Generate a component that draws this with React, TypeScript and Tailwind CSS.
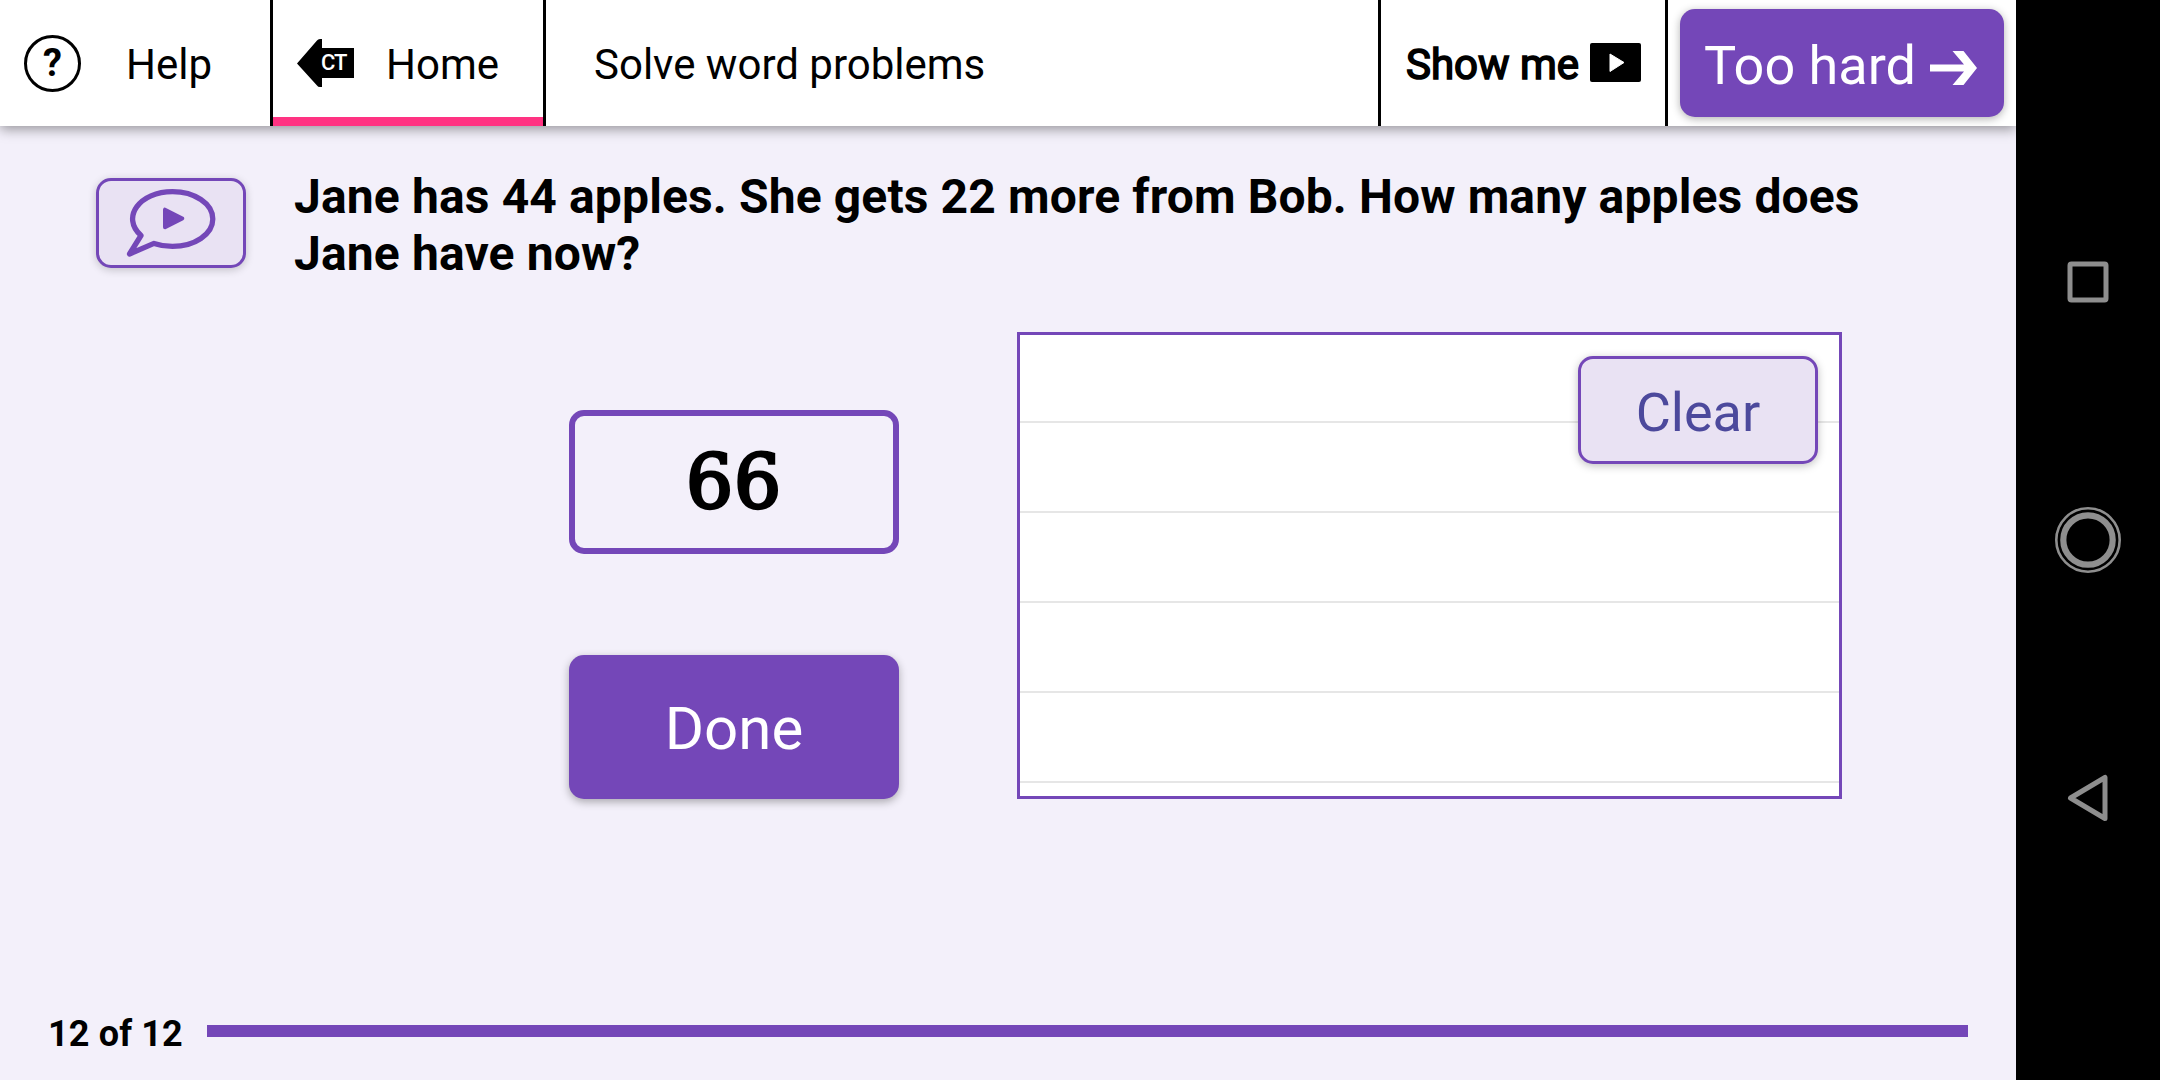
import React from 'react';

function HelpIcon() {
  return (
    <div className="flex h-[57px] w-[57px] shrink-0 items-center justify-center rounded-full border-[3px] border-black">
      <span className="text-[38px] font-bold leading-[44px]">?</span>
    </div>
  );
}

function BackTag() {
  return (
    <div className="relative h-[48px] w-[57px] shrink-0">
      <svg className="h-full w-full" viewBox="0 0 57 48">
        <path d="M0 24.500 20 1.500Q21 0 23 0h2v9h32v30H25v9h-2q-2 0-3-1.500z" />
      </svg>
      <span className="absolute left-[24px] top-[12px] text-[22px] font-medium leading-[24px] tracking-[-1px] text-white">CT</span>
    </div>
  );
}

function Header() {
  return (
    <header className="relative flex h-[126px] bg-white text-[42px] leading-[48px] shadow-[0_3px_12px_rgba(0,0,0,0.4)]">
      <div className="flex w-[270px] items-center pl-[24px]">
        <HelpIcon />
        <span className="ml-[45px] mt-[4px]">Help</span>
      </div>
      <div className="flex w-[276px] items-center border-x-[3px] border-black pl-[24px] shadow-[inset_0_-9px_#ff3382]">
        <BackTag />
        <span className="ml-[32px] mt-[4px]">Home</span>
      </div>
      <div className="flex flex-1 items-center pl-[48px]">
        <span className="mt-[4px]">Solve word problems</span>
      </div>
      <div className="flex w-[290px] items-center border-x-[3px] border-black pl-[25px]">
        <span className="mt-[3px] [-webkit-text-stroke:1.6px_#000]">Show me</span>
        <svg className="-mt-[2px] ml-[11px] h-[39px] w-[51px]" viewBox="0 0 51 39">
          <rect width="51" height="39" rx="2" />
          <path d="M20 11v17.500L34 19.500z" fill="#fff" stroke="#fff" strokeLinejoin="round" />
        </svg>
      </div>
      <div className="flex w-[348px] items-center pl-[12px]">
        <button className="flex h-[108px] w-[324px] items-center rounded-[15px] bg-[#7447b8] pl-[24px] text-[54px] leading-[63px] text-white shadow-[0_2px_8px_rgba(0,0,0,0.3)]">
          <span className="mt-[4px]">Too hard</span>
          <svg className="ml-[14px] mt-[10px] h-[34px] w-[47px]" viewBox="0 0 47 34" fill="#fff">
            <path d="M0 13.500H34L22.500 0H33.500L47 17 33.500 34H22.500L34 20.500H0z" />
          </svg>
        </button>
      </div>
    </header>
  );
}

function SpeakButton() {
  return (
    <button className="flex h-[90px] w-[150px] shrink-0 items-center justify-center rounded-[15px] border-[3px] border-[#7447b8] bg-[#e9e2f3] shadow-[0_2px_8px_rgba(0,0,0,0.2)]">
      <svg className="h-[84px] w-[144px]" viewBox="0 0 144 84" fill="none" stroke="#7447b8" strokeLinejoin="round">
        <path d="M42 54.500C21.500 36 41 10.600 73.500 10.600c22 0 40.300 12 40.300 27.400S95.500 65.400 73.500 65.400c-7 0-12-.8-18.500-3L30.500 73z" strokeWidth="5.300" />
        <path d="M66 28.700v17.600l17.300-8.800z" fill="#7447b8" strokeWidth="4" />
      </svg>
    </button>
  );
}

function Workpad() {
  return (
    <div className="flex h-[467px] w-[825px] items-start justify-end border-[3px] border-[#7447b8] bg-white bg-[repeating-linear-gradient(to_bottom,transparent_0px,transparent_88px,#e6e6e6_88px,#e6e6e6_90px)] bg-[position:0_-2px] pr-[21px] pt-[21px]">
      <button className="h-[108px] w-[240px] rounded-[15px] border-[3px] border-[#7447b8] bg-[#e9e2f3] text-[54px] leading-[63px] text-[#4c499c] shadow-[0_2px_8px_rgba(0,0,0,0.25)]">
        <span className="relative top-[2px]">Clear</span>
      </button>
    </div>
  );
}

function SystemBar() {
  return (
    <nav className="flex w-[144px] flex-col items-center justify-center gap-[192px] bg-black">
      <svg className="h-[66px] w-[66px]" viewBox="0 0 66 66" fill="none" stroke="#8e8e8e">
        <rect x="15" y="15" width="36" height="36" rx="1.500" strokeWidth="5" />
      </svg>
      <svg className="h-[66px] w-[66px]" viewBox="0 0 66 66" fill="none" stroke="#8e8e8e">
        <circle cx="33" cy="33" r="31.700" strokeWidth="2.600" />
        <circle cx="33" cy="33" r="24.700" strokeWidth="6.200" />
      </svg>
      <svg className="h-[66px] w-[66px]" viewBox="0 0 66 66" fill="none" stroke="#8e8e8e">
        <path d="M15.500 33 50 12.500v41z" strokeWidth="5" strokeLinejoin="round" />
      </svg>
    </nav>
  );
}

export default function App() {
  return (
    <div className="flex h-[1080px] w-[2160px] overflow-hidden bg-black font-['Roboto',sans-serif] text-black">
      <main className="flex w-[2016px] flex-col overflow-hidden bg-[#f3f0fa]">
        <Header />
        <section className="mt-[42px] flex h-[127px] pl-[96px]">
          <div className="pt-[10px]"><SpeakButton /></div>
          <h1 className="ml-[48px] w-[1610px] text-[48px] font-bold leading-[57px] tracking-[0.135px]">
            Jane has 44 apples. She gets 22 more from Bob. How many apples does Jane have now?
          </h1>
        </section>
        <section className="mt-[37px] flex h-[467px] items-end pl-[569px]">
          <div className="flex w-[330px] flex-col gap-[101px]">
            <div className="flex h-[144px] items-center justify-center rounded-[15px] border-[6px] border-[#7447b8] font-['DejaVu_Serif',serif] text-[74px] leading-none tracking-[1px] [-webkit-text-stroke:3.200px_#000]">
              66
            </div>
            <button className="h-[144px] rounded-[15px] bg-[#7447b8] text-[60px] leading-[70px] text-white shadow-[0_3px_9px_rgba(0,0,0,0.3)]">
              <span className="relative top-[2px]">Done</span>
            </button>
          </div>
          <div className="ml-[118px]"><Workpad /></div>
        </section>
        <footer className="mt-auto flex h-[98px] items-center pl-[48px] pr-[48px]">
          <span className="relative top-[3px] w-[159px] text-[36px] font-bold leading-[42px] tracking-[0.15px]">12 of 12</span>
          <div className="h-[12px] flex-1 bg-[#7447b8]" />
        </footer>
      </main>
      <SystemBar />
    </div>
  );
}
